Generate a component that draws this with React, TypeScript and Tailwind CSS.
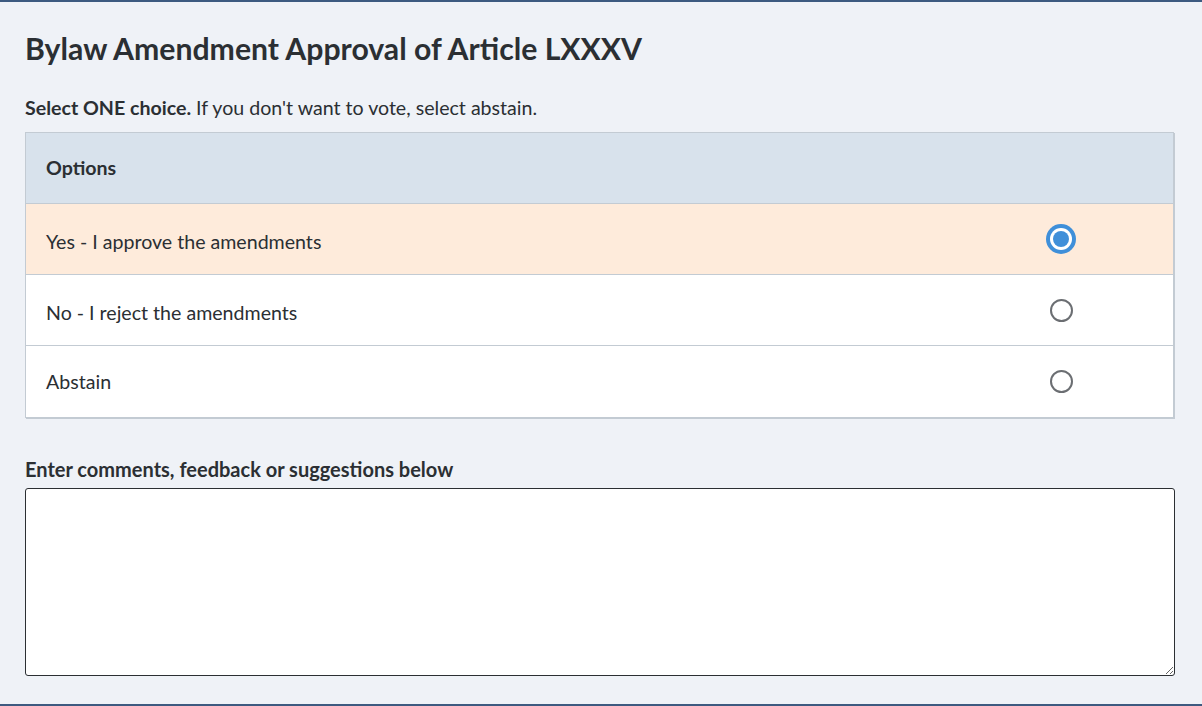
import { useState } from "react";

const options = [
  { id: "yes", label: "Yes - I approve the amendments" },
  { id: "no", label: "No - I reject the amendments" },
  { id: "abstain", label: "Abstain" },
];

function Radio({ checked }: { checked: boolean }) {
  if (checked) {
    return (
      <span className="flex h-[30px] w-[30px] items-center justify-center rounded-full bg-[#3f8fd9]">
        <span className="flex h-[22px] w-[22px] items-center justify-center rounded-full bg-white">
          <span className="h-[16px] w-[16px] rounded-full bg-[#3f8fd9]" />
        </span>
      </span>
    );
  }
  return (
    <span className="block h-[23px] w-[23px] rounded-full border-2 border-[#6b6e72] bg-white" />
  );
}

export default function App() {
  const [choice, setChoice] = useState("yes");
  const [comment, setComment] = useState("");

  return (
    <div
      className="h-[706px] border-t-2 border-b-2 border-[#3d5a80] bg-[#eff2f7] pl-[25px] pr-[27px] text-[#2b2f33]"
      style={{ fontFamily: "Lato, 'Open Sans', sans-serif" }}
    >
      <h1 className="pt-[28px] text-[30.2px] font-bold leading-[36px]">
        Bylaw Amendment Approval of Article LXXXV
      </h1>

      <p className="mt-[30px] text-[19.6px] leading-[24px]">
        <span className="font-bold">Select ONE choice.</span> If you don't want
        to vote, select abstain.
      </p>

      <div className="mr-[1px] mt-[12px] border border-[#c3cbd3] shadow-[1px_1px_0_#c3cbd3]">
        <div className="flex h-[71px] items-center border-b border-[#c3cbd3] bg-[#d8e2ec] px-5 text-[19.6px] font-bold">
          Options
        </div>
        {options.map((o, i) => {
          const last = i === options.length - 1;
          return (
            <label
              key={o.id}
              className={
                "flex h-[71px] cursor-pointer items-center text-[19.6px] " +
                (last ? "" : "border-b border-[#c3cbd3] ") +
                (choice === o.id ? "bg-[#feebdb]" : "bg-white")
              }
            >
              <input
                type="radio"
                name="vote"
                className="sr-only"
                checked={choice === o.id}
                onChange={() => setChoice(o.id)}
              />
              <span className={"flex-1 px-5 " + (last ? "" : "pt-[6px]")}>
                {o.label}
              </span>
              <span className="flex w-[224px] justify-center">
                <Radio checked={choice === o.id} />
              </span>
            </label>
          );
        })}
      </div>

      <label
        htmlFor="comments"
        className="mt-[39px] block text-[20px] font-bold leading-[24px]"
      >
        Enter comments, feedback or suggestions below
      </label>
      <textarea
        id="comments"
        value={comment}
        onChange={(e) => setComment(e.target.value)}
        className="mt-[7px] block h-[188px] w-full rounded-[3px] border border-[#2b2f33] bg-white p-2 text-[16px]"
      />
    </div>
  );
}
